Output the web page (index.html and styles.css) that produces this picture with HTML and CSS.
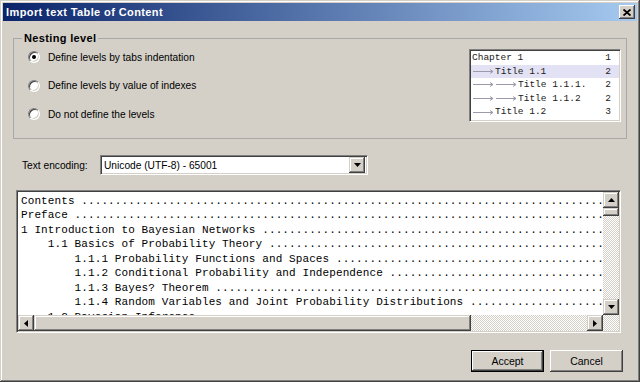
FILE: index.html
```html
<!DOCTYPE html>
<html lang="en">
<head>
  <meta charset="UTF-8">
  <title>Import text Table of Content</title>
  <link rel="stylesheet" href="styles.css">
</head>
<body>
  <div class="window">
    <div class="titlebar">
      <span class="title">Import text Table of Content</span>
      <span class="close-btn">
        <svg width="8" height="7" viewBox="0 0 8 7"><path d="M0.5 0.5 L7.5 6.5 M7.5 0.5 L0.5 6.5" stroke="#000" stroke-width="1.8"/></svg>
      </span>
    </div>

    <div class="content">
      <fieldset class="group">
        <legend>Nesting level</legend>
        <div class="options">
          <div class="option"><span class="radio checked"></span>Define levels by tabs indentation</div>
          <div class="option"><span class="radio"></span>Define levels by value of indexes</div>
          <div class="option"><span class="radio"></span>Do not define the levels</div>
        </div>
        <div class="preview">
          <div class="preview-row"><span class="entry">Chapter 1</span><span>1</span></div>
          <div class="preview-row selected"><span class="entry"><svg class="tab" viewBox="0 0 23 9"><path d="M1 4.5 H21 M18 2.5 L21 4.5 L18 6.5" /></svg>Title 1.1</span><span>2</span></div>
          <div class="preview-row"><span class="entry"><svg class="tab" viewBox="0 0 23 9"><path d="M1 4.5 H21 M18 2.5 L21 4.5 L18 6.5" /></svg><svg class="tab" viewBox="0 0 23 9"><path d="M1 4.5 H21 M18 2.5 L21 4.5 L18 6.5" /></svg>Title 1.1.1.</span><span>2</span></div>
          <div class="preview-row"><span class="entry"><svg class="tab" viewBox="0 0 23 9"><path d="M1 4.5 H21 M18 2.5 L21 4.5 L18 6.5" /></svg><svg class="tab" viewBox="0 0 23 9"><path d="M1 4.5 H21 M18 2.5 L21 4.5 L18 6.5" /></svg>Title 1.1.2</span><span>2</span></div>
          <div class="preview-row"><span class="entry"><svg class="tab" viewBox="0 0 23 9"><path d="M1 4.5 H21 M18 2.5 L21 4.5 L18 6.5" /></svg>Title 1.2</span><span>3</span></div>
        </div>
      </fieldset>

      <div class="encoding-row">
        <span class="encoding-label">Text encoding:</span>
        <div class="combo">
          <span class="combo-value">Unicode (UTF-8) - 65001</span>
          <span class="scroll-btn combo-btn"><svg width="7" height="4" viewBox="0 0 7 4"><path d="M0 0 H7 L3.5 4 Z"/></svg></span>
        </div>
      </div>

      <div class="text-box">
<pre class="text-content">Contents ....................................................................................................
Preface ....................................................................................................
1 Introduction to Bayesian Networks ....................................................................................................
    1.1 Basics of Probability Theory ....................................................................................................
        1.1.1 Probability Functions and Spaces ....................................................................................................
        1.1.2 Conditional Probability and Independence ....................................................................................................
        1.1.3 Bayes? Theorem ....................................................................................................
        1.1.4 Random Variables and Joint Probability Distributions ....................................................................................................
    1.2 Bayesian Inference ....................................................................................................
    1.3 Large Networks ....................................................................................................</pre>
        <div class="vscroll">
          <span class="scroll-btn"><svg width="7" height="4" viewBox="0 0 7 4"><path d="M0 4 H7 L3.5 0 Z"/></svg></span>
          <span class="thumb vthumb"></span>
          <span class="track"></span>
          <span class="scroll-btn"><svg width="7" height="4" viewBox="0 0 7 4"><path d="M0 0 H7 L3.5 4 Z"/></svg></span>
        </div>
        <div class="hscroll">
          <span class="scroll-btn"><svg width="4" height="7" viewBox="0 0 4 7"><path d="M4 0 V7 L0 3.5 Z"/></svg></span>
          <span class="thumb hthumb"></span>
          <span class="track"></span>
          <span class="scroll-btn"><svg width="4" height="7" viewBox="0 0 4 7"><path d="M0 0 V7 L4 3.5 Z"/></svg></span>
        </div>
        <div class="corner"></div>
      </div>

      <div class="buttons">
        <button class="btn default">Accept</button>
        <button class="btn">Cancel</button>
      </div>
    </div>
  </div>
</body>
</html>
```

FILE: styles.css
```css
body {
  margin: 0;
  font-family: "Liberation Sans", Arial, sans-serif;
  font-size: 10.2px;
  color: #000;
}

.window {
  width: 640px;
  height: 382px;
  box-sizing: border-box;
  padding: 3px;
  background: #d4d0c8;
  box-shadow: inset -1px -1px #404040, inset 1px 1px #d4d0c8,
              inset -2px -2px #808080, inset 2px 2px #fff;
}

.titlebar {
  height: 18px;
  display: flex;
  align-items: center;
  justify-content: space-between;
  padding: 0 2px 0 3px;
  background: linear-gradient(90deg, #0a246a, #a6caf0);
}

.title {
  color: #fff;
  font-weight: bold;
  font-size: 11px;
  letter-spacing: 0.4px;
}

.close-btn {
  width: 16px;
  height: 14px;
  display: flex;
  align-items: center;
  justify-content: center;
  background: #d4d0c8;
  box-shadow: inset -1px -1px #404040, inset 1px 1px #fff,
              inset -2px -2px #808080;
}

/* group box */
.group {
  margin: 10px 10px 0 10px;
  padding: 4px 5px 16px 8px;
  border: 1px solid #a8a8a8;
  display: flex;
  justify-content: space-between;
  align-items: flex-start;
}

.group legend {
  padding: 0 2px;
  font-weight: bold;
  font-size: 11px;
  letter-spacing: 0.35px;
  line-height: 14px;
}

.options {
  margin: 1px 0 0 6px;
  display: flex;
  flex-direction: column;
  gap: 14.5px;
}

.option {
  display: flex;
  align-items: center;
  height: 14px;
}

.radio {
  width: 12px;
  height: 12px;
  box-sizing: border-box;
  margin-right: 8px;
  border-radius: 50%;
  background: #fff;
  border: 1px solid;
  border-color: #808080 #fff #fff #808080;
  box-shadow: inset 1px 1px #404040, inset -1px -1px #d4d0c8;
  display: flex;
  align-items: center;
  justify-content: center;
}

.radio.checked::after {
  content: "";
  width: 4px;
  height: 4px;
  border-radius: 50%;
  background: #000;
}

.preview {
  width: 152px;
  height: 73px;
  box-sizing: border-box;
  padding: 1px;
  background: #fff;
  border: 1px solid;
  border-color: #808080 #fff #fff #808080;
  box-shadow: inset 1px 1px #404040, inset -1px -1px #d4d0c8;
  font-family: "Liberation Mono", "Courier New", monospace;
  font-size: 9.5px;
  color: #222;
}

.preview-row {
  height: 13.6px;
  line-height: 13.6px;
  display: flex;
  justify-content: space-between;
  padding: 0 8px 0 1px;
}

.preview-row.selected {
  background: #e2e2f4;
}

.entry {
  display: flex;
  align-items: center;
}

.tab {
  width: 23px;
  height: 9px;
  fill: none;
  stroke: #9a9aaa;
  stroke-width: 1;
}

/* encoding */
.encoding-row {
  margin: 16px 0 0 19px;
  display: flex;
  align-items: center;
  height: 20px;
}

.encoding-label {
  width: 78px;
}

.combo {
  width: 268px;
  height: 20px;
  box-sizing: border-box;
  padding: 2px;
  background: #fff;
  border: 1px solid;
  border-color: #808080 #fff #fff #808080;
  box-shadow: inset 1px 1px #404040, inset -1px -1px #d4d0c8;
  display: flex;
  align-items: center;
  justify-content: space-between;
}

.combo-value {
  padding-left: 1px;
}

.scroll-btn {
  width: 16px;
  height: 16px;
  flex: none;
  display: flex;
  align-items: center;
  justify-content: center;
  background: #d4d0c8;
  box-shadow: inset -1px -1px #404040, inset 1px 1px #d4d0c8,
              inset -2px -2px #808080, inset 2px 2px #fff;
}

.combo-btn {
  height: 16px;
}

/* text area */
.text-box {
  margin: 15px 16px 0 13px;
  height: 143px;
  box-sizing: border-box;
  padding: 1px;
  background: #fff;
  border: 1px solid;
  border-color: #808080 #fff #fff #808080;
  box-shadow: inset 1px 1px #404040, inset -1px -1px #d4d0c8;
  display: grid;
  grid-template-columns: 1fr 16px;
  grid-template-rows: 1fr 16px;
  overflow: hidden;
}

.text-content {
  margin: 0;
  padding: 1.5px 0 0 3px;
  overflow: hidden;
  font-family: "Liberation Mono", "Courier New", monospace;
  font-size: 11px;
  letter-spacing: 0.1px;
  line-height: 14.5px;
  color: #000;
}

.vscroll,
.hscroll {
  display: flex;
}

.vscroll {
  flex-direction: column;
}

.track,
.corner {
  flex: 1;
  background: repeating-conic-gradient(#fff 0 25%, #d4d0c8 0 50%) 0 0 / 2px 2px;
}

.thumb {
  background: #d4d0c8;
  box-shadow: inset -1px -1px #404040, inset 1px 1px #d4d0c8,
              inset -2px -2px #808080, inset 2px 2px #fff;
}

.vthumb {
  height: 8px;
}

.hthumb {
  width: 437px;
}

/* buttons */
.buttons {
  margin-top: 17px;
  padding-right: 14px;
  display: flex;
  justify-content: flex-end;
  gap: 6px;
}

.btn {
  width: 73px;
  height: 22px;
  font-family: "Liberation Sans", Arial, sans-serif;
  font-size: 10.5px;
  color: #000;
  background: #d4d0c8;
  border: none;
  box-shadow: inset -1px -1px #404040, inset 1px 1px #fff,
              inset -2px -2px #808080;
}

.btn.default {
  border: 1px solid #000;
}
```
